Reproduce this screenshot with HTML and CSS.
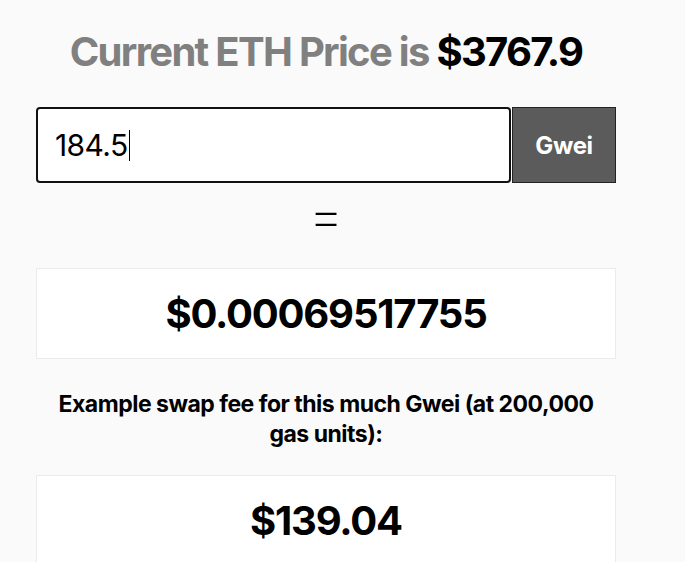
FILE: index.html
```html
<!DOCTYPE html>
<html lang="en">
<head>
<meta charset="utf-8">
<title>ETH Gas Converter</title>
<link rel="stylesheet" href="styles.css">
</head>
<body>
<main class="app">
  <h1 class="title">Current ETH Price is <span class="price">$3767.9</span></h1>
  <div class="input-row">
    <div class="amount"><span class="amount-text">184.5</span><span class="caret"></span></div>
    <button class="unit">Gwei</button>
  </div>
  <div class="equals">=</div>
  <div class="result"><span class="result-value">$0.00069517755</span></div>
  <p class="note">Example swap fee for this much Gwei (at 200,000 gas units):</p>
  <div class="result"><span class="result-value">$139.04</span></div>
</main>
</body>
</html>
```
FILE: styles.css
```css
html, body {
  margin: 0;
  padding: 0;
  background: #fafafa;
}
body {
  font-family: Inter, "Noto Sans", sans-serif;
  color: #000;
}
.app {
  width: 580px;
  margin-left: 36px;
  display: flex;
  flex-direction: column;
}
.title {
  margin: 30px 0 0;
  text-align: center;
  font-size: 40px;
  line-height: 44px;
  font-weight: 700;
  letter-spacing: -1.7px;
  color: #808080;
}
.price {
  color: #000;
}
.input-row {
  display: flex;
  margin-top: 33px;
  height: 76px;
}
.amount {
  flex: 1;
  box-sizing: border-box;
  border: 2px solid #111;
  border-radius: 4px;
  background: #fff;
  display: flex;
  align-items: center;
  padding-left: 17px;
}
.amount-text {
  font-size: 30px;
  font-weight: 400;
  letter-spacing: -0.6px;
}
.caret {
  display: inline-block;
  width: 1px;
  height: 31px;
  background: #000;
  margin-left: 1px;
}
.unit {
  width: 104px;
  margin-left: 1px;
  box-sizing: border-box;
  border: 1px solid #222;
  background: #5b5b5b;
  color: #fff;
  font-family: Inter, sans-serif;
  font-size: 24px;
  font-weight: 700;
  letter-spacing: -0.4px;
  padding: 0;
}
.equals {
  text-align: center;
  font-size: 56px;
  font-weight: 200;
  line-height: 70px;
  margin-top: -3px;
  margin-bottom: 18px;
}
.result {
  box-sizing: border-box;
  height: 91px;
  background: #fff;
  border: 1px solid #ebebeb;
  display: flex;
  align-items: center;
  justify-content: center;
}
.result-value {
  font-size: 40px;
  font-weight: 700;
  letter-spacing: -1.2px;
}
.note {
  margin: 30px 10px 26px;
  text-align: center;
  font-size: 23px;
  line-height: 30px;
  font-weight: 700;
  letter-spacing: -0.5px;
}
```
